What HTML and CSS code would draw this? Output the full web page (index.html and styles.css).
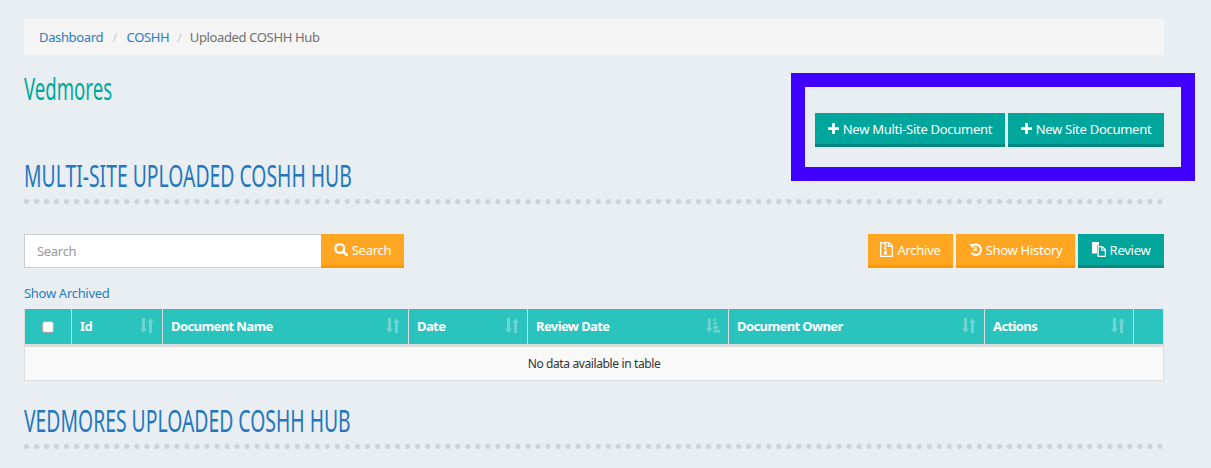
FILE: index.html
```html
<!DOCTYPE html>
<html lang="en">
<head>
<meta charset="utf-8">
<title>Uploaded COSHH Hub</title>
<link rel="stylesheet" href="styles.css">
</head>
<body>
<svg class="defs" width="0" height="0" aria-hidden="true">
  <symbol id="i-plus" viewBox="0 0 12 12"><path d="M4.500 0h3v4.500H12v3H7.500V12h-3V7.500H0v-3h4.500z" fill="currentColor"/></symbol>
  <symbol id="i-search" viewBox="0 0 14 13"><circle cx="5.800" cy="5.500" r="4.400" fill="none" stroke="currentColor" stroke-width="2.200"/><path d="M9 8.700l3.800 3.300" stroke="currentColor" stroke-width="2.800" stroke-linecap="round"/></symbol>
  <symbol id="i-archive" viewBox="0 0 13 15"><path d="M.7.7h8l3.600 3.600v10H.7z" fill="none" stroke="currentColor" stroke-width="1.300"/><path d="M8.400.7v3.800h3.900" fill="none" stroke="currentColor" stroke-width="1.100"/><path d="M4 1.500h2v1.600H4zM4.800 3.400h2V5H4.800zM4 5.300h2v1.600H4zM4.800 7.200h2v1.300h-2zM4 9h3v3.400H4z" fill="currentColor"/></symbol>
  <symbol id="i-history" viewBox="0 0 13 13"><path d="M3 3.200A5.200 5.200 0 1 1 2.400 9.500" fill="none" stroke="currentColor" stroke-width="2"/><path d="M0 1l4.800.1-.2 4.600z" fill="currentColor"/><path d="M6.800 3.700v3.200H4.300" fill="none" stroke="currentColor" stroke-width="1.700"/></symbol>
  <symbol id="i-files" viewBox="0 0 14 15"><path d="M0 0h7v3.500H5v8H0z" fill="currentColor"/><path d="M6.200 4.700h4l3.200 3.200v6.500H6.200z" fill="none" stroke="currentColor" stroke-width="1.300"/><path d="M9.700 4.700v3.500h3.700" fill="none" stroke="currentColor" stroke-width="1.100"/></symbol>
  <symbol id="i-sort" viewBox="0 0 14 15"><path d="M2 0h3v10.500h2L3.500 15 0 10.500h2z" fill="currentColor"/><path d="M9 15h3V4.500h2L10.500 0 7 4.500h2z" fill="currentColor"/></symbol>
  <symbol id="i-sort-on" viewBox="0 0 15 15"><path d="M2 0h3v10.500h2L3.500 15 0 10.500h2z" fill="currentColor"/><path d="M8 0h2.500v3H8zM8 4h3.500v3H8zM8 8h5v3H8zM8 12h7v3H8z" fill="currentColor"/></symbol>
</svg>

<main class="page">
  <nav class="crumbs">
    <a href="#">Dashboard</a><span class="sep">/</span><a href="#">COSHH</a><span class="sep sep-last">/</span><span class="here">Uploaded COSHH Hub</span>
  </nav>

  <div class="top">
    <h2 class="site"><span class="narrow narrow-site">Vedmores</span></h2>
    <div class="btns top-btns">
      <a class="btn teal" href="#"><svg class="ico plus"><use href="#i-plus"/></svg>New Multi-Site Document</a>
      <a class="btn teal" href="#"><svg class="ico plus"><use href="#i-plus"/></svg>New Site Document</a>
    </div>
    <div class="highlight"></div>
  </div>

  <h1 class="section first"><span class="narrow">MULTI-SITE UPLOADED COSHH HUB</span></h1>

  <div class="tools">
    <form class="search">
      <input class="search-input" type="text" placeholder="Search">
      <button class="btn amber search-btn" type="button"><svg class="ico i-s"><use href="#i-search"/></svg>Search</button>
    </form>
    <div class="btns">
      <a class="btn amber action" href="#"><svg class="ico i-a"><use href="#i-archive"/></svg>Archive</a>
      <a class="btn amber action" href="#"><svg class="ico i-h"><use href="#i-history"/></svg>Show History</a>
      <a class="btn teal action" href="#"><svg class="ico i-f"><use href="#i-files"/></svg>Review</a>
    </div>
  </div>

  <a class="archived" href="#">Show Archived</a>

  <table class="grid">
    <colgroup>
      <col class="c0"><col class="c1"><col class="c2"><col class="c3"><col class="c4"><col class="c5"><col class="c6"><col class="c7">
    </colgroup>
    <thead>
      <tr>
        <th class="check"><span class="box"></span></th>
        <th><div class="th">Id<svg class="sort"><use href="#i-sort"/></svg></div></th>
        <th><div class="th">Document Name<svg class="sort"><use href="#i-sort"/></svg></div></th>
        <th><div class="th">Date<svg class="sort"><use href="#i-sort"/></svg></div></th>
        <th><div class="th">Review Date<svg class="sort"><use href="#i-sort-on"/></svg></div></th>
        <th><div class="th">Document Owner<svg class="sort"><use href="#i-sort"/></svg></div></th>
        <th><div class="th">Actions<svg class="sort"><use href="#i-sort"/></svg></div></th>
        <th></th>
      </tr>
    </thead>
    <tbody>
      <tr><td colspan="8">No data available in table</td></tr>
    </tbody>
  </table>

  <h1 class="section second"><span class="narrow">VEDMORES UPLOADED COSHH HUB</span></h1>
</main>
</body>
</html>
```

FILE: styles.css
```css
* { box-sizing: border-box; }
html, body { margin: 0; height: 100%; overflow: hidden; }
body {
  background: #e9eef3;
  font-family: "Noto Sans", "Open Sans", sans-serif;
  font-size: 13px;
  letter-spacing: -.3px;
  color: #444;
}
a { text-decoration: none; color: #2b7cc0; }
.defs { position: absolute; }
.page { padding: 19px 47px 0 24px; }

.crumbs {
  height: 36px;
  background: #f5f5f5;
  padding: 0 15px;
  display: flex;
  align-items: center;
  font-size: 13px;
  letter-spacing: -.36px;
}
.crumbs .sep { color: #ccc; margin: 0 9.5px; }
.crumbs .sep-last { margin: 0 8px; }
.crumbs .here { color: #6f6f6f; }

.top { position: relative; display: flex; justify-content: space-between; height: 92px; }
.narrow {
  display: inline-block;
  white-space: nowrap;
  transform: scaleX(.645);
  transform-origin: 0 50%;
}
.narrow-site { transform: scaleX(.62); }
.site {
  margin: 18px 0 0;
  width: 100px;
  font-family: "Noto Sans", sans-serif;
  font-weight: 400;
  font-size: 30px;
  line-height: 32px;
  letter-spacing: 0;
  color: #00a99d;
}
.btns { display: flex; gap: 3px; }
.top-btns { margin-top: 58px; height: 34px; }
.highlight {
  position: absolute;
  left: 767px;
  top: 18px;
  width: 404px;
  height: 108px;
  border: 14px solid #4000ff;
}

.btn {
  display: inline-flex;
  align-items: center;
  justify-content: center;
  height: 34px;
  border: 0;
  border-bottom: 3px solid;
  padding: 0;
  color: #fff;
  font-family: inherit;
  font-size: 13px;
  letter-spacing: -.27px;
  white-space: nowrap;
}
.teal { background: #00a69b; border-bottom-color: #00887f; }
.amber { background: #ffa723; border-bottom-color: #ff9800; }
.top-btns .btn:first-child { width: 190px; }
.top-btns .btn:last-child { width: 156px; }
.ico { color: #fff; margin-right: 4px; flex: none; }
.plus { width: 11px; height: 11px; }
.i-s { width: 14px; height: 13px; }
.i-a { width: 13px; height: 15px; }
.i-h { width: 13px; height: 13px; }
.i-f { width: 14px; height: 15px; }

.section {
  margin: 0;
  font-family: "Noto Sans", sans-serif;
  font-weight: 400;
  font-size: 30px;
  line-height: 34px;
  letter-spacing: 0;
  color: #2577bd;
  padding-top: 3px;
  background: radial-gradient(circle at 2.5px 2.5px, #d0d3d6 2.3px, transparent 2.8px) 0 100% / 10.035px 5px repeat-x;
  height: 48px;
}
.first { margin-top: 9px; }
.second { margin-top: 20px; }

.tools { display: flex; justify-content: space-between; margin-top: 30px; }
.search { display: flex; margin: 0; }
.search-input {
  width: 297px;
  height: 34px;
  border: 1px solid #ccc;
  border-right: 0;
  background: #fff;
  padding: 0 12px;
  font-family: inherit;
  font-size: 13px;
  letter-spacing: -.3px;
  outline: 0;
}
.search-input::placeholder { color: #999; }
.search-btn { width: 83px; }
.action:nth-child(1) { width: 85px; }
.action:nth-child(2) { width: 119px; }
.action:nth-child(3) { width: 86px; }

.archived { display: block; margin-top: 17px; height: 17px; line-height: 17px; font-size: 13px; }

.grid {
  margin-top: 7px;
  width: 1140px;
  table-layout: fixed;
  border-collapse: separate;
  border-spacing: 0;
  border: 1px solid #ddd;
  border-top: 0;
}
.c0 { width: 47px; }
.c1 { width: 91px; }
.c2 { width: 246px; }
.c3 { width: 119px; }
.c4 { width: 201px; }
.c5 { width: 256px; }
.c6 { width: 149px; }
.grid th {
  height: 38px;
  padding: 0 8px 2px;
  background: #2ac3bd;
  color: #fff;
  font-size: 13px;
  font-weight: 700;
  letter-spacing: -.6px;
  text-align: left;
  border-right: 1px solid #ddd;
  border-bottom: 3px solid #ddd;
}
.grid th:last-child { border-right: 0; }
.th { display: flex; justify-content: space-between; align-items: center; }
.sort { width: 14px; height: 15px; color: rgba(255, 255, 255, .3); }
.check { text-align: center !important; }
.box {
  display: inline-block;
  width: 12px;
  height: 12px;
  background: #fff;
  border: 1px solid #aaa;
  border-radius: 3px;
  vertical-align: middle;
}
.grid td {
  height: 33px;
  background: #f9f9f9;
  text-align: center;
  font-size: 12px;
  letter-spacing: -.38px;
  color: #333;
}
```
